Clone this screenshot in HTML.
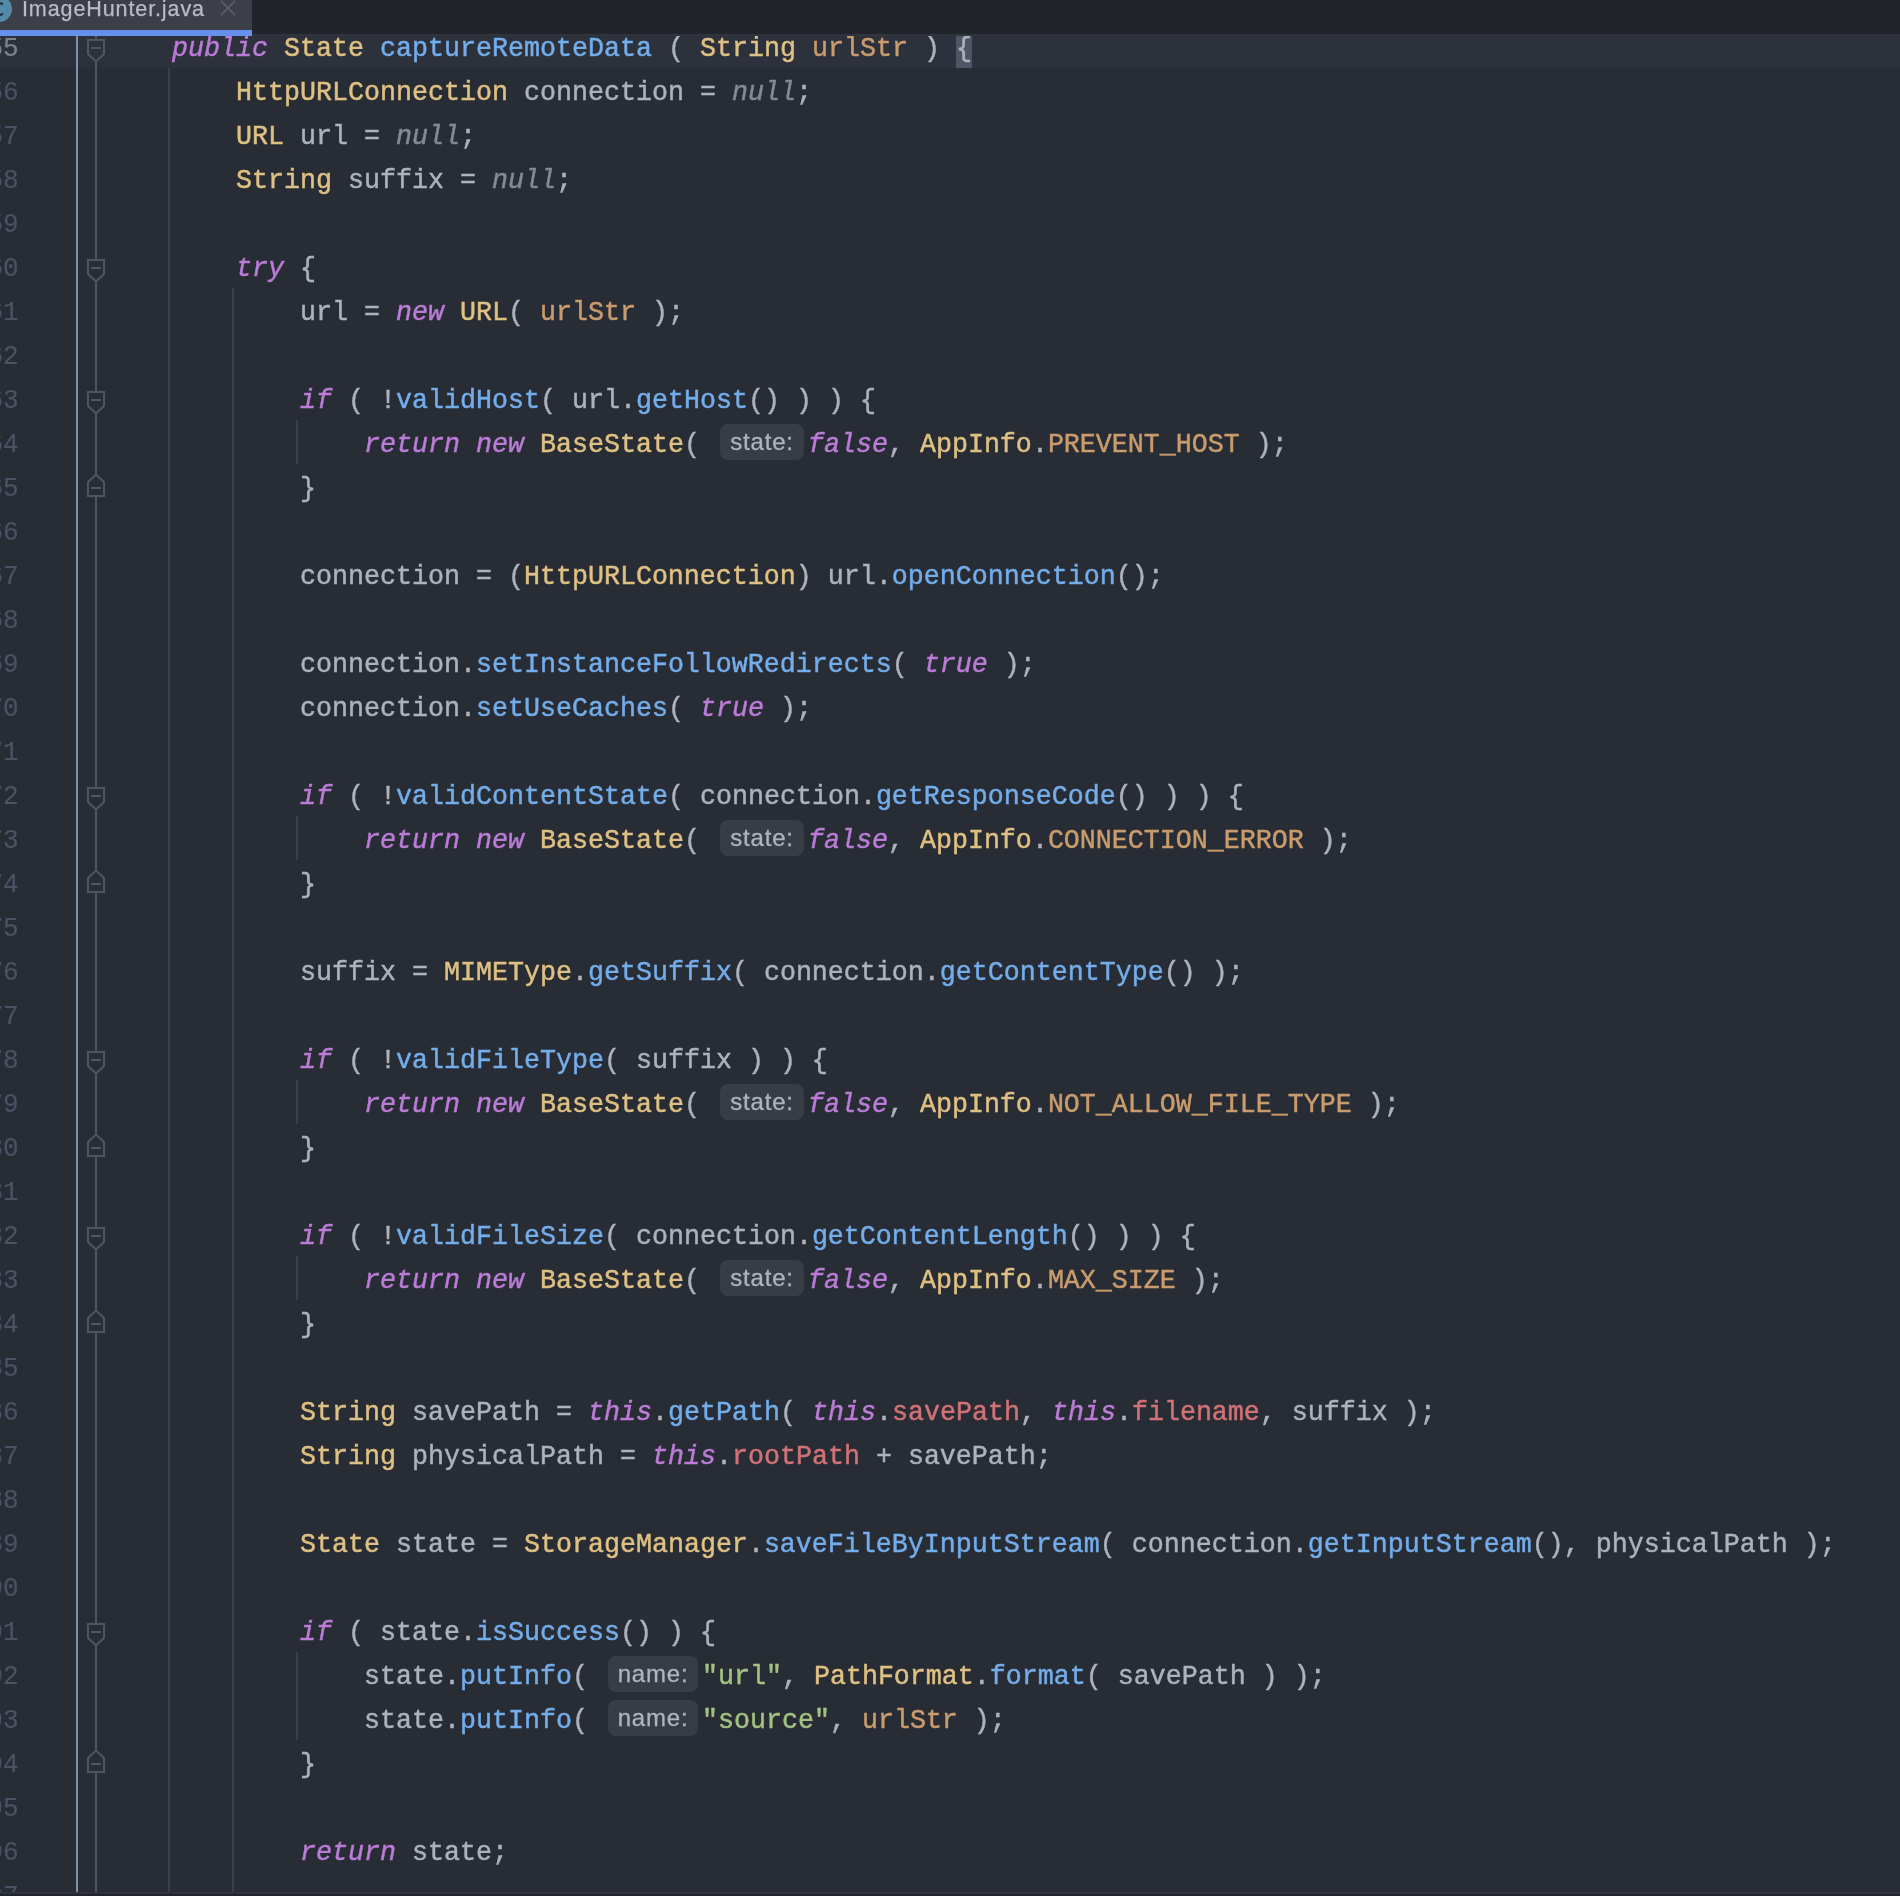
<!DOCTYPE html>
<html><head><meta charset="utf-8"><title>ImageHunter.java</title><style>
*{margin:0;padding:0;box-sizing:border-box}
html,body{width:1900px;height:1896px;overflow:hidden;background:#21252b}
#ed{position:absolute;left:0;top:36px;width:1900px;height:1856px;background:#282c34;overflow:hidden}
#inner{position:absolute;left:0;top:-36px;width:1900px;height:1896px}
.cur{position:absolute;left:0;width:1900px;height:44px;background:#2c313b}
.brace{position:absolute;width:16px;height:44px;background:#4f5565}
.guide{position:absolute;width:2px;background:#3b4048}
.ln{position:absolute;left:108px;height:44px;line-height:44px;white-space:pre;font-family:"Liberation Mono",monospace;font-size:26.667px;color:#acb2be;transform:translateY(2.6px) scaleY(1.07);transform-origin:0 22px;will-change:transform;-webkit-text-stroke:0.45px currentColor}
.ln span{display:inline-block}
.sp{display:inline-block;height:1px}
.k{color:#bb7cd7;font-style:italic}
.t{color:#dfc184}
.f{color:#74adea}
.p{color:#c99c6e}
.c{color:#c99c6e}
.r{color:#d17277}
.s{color:#a1c281}
.n{color:#858a96;font-style:italic}
.d{color:#acb2be}
.inlay{position:absolute;height:36px;line-height:36px;background:#383c46;border-radius:8px;color:#afb4c0;font-family:"Liberation Sans",sans-serif;font-size:24px;letter-spacing:0.8px;text-align:center;will-change:transform;-webkit-text-stroke:0.3px currentColor}
.num{position:absolute;left:-40px;width:58.6px;height:44px;line-height:44px;text-align:right;font-family:"Liberation Mono",monospace;font-size:26px;color:#4b5263;transform:translateY(3px) scaleY(1.04);transform-origin:0 22px;will-change:transform;-webkit-text-stroke:0.2px currentColor}
.cn{color:#7b818d}
.gsep{position:absolute;left:76px;top:0;width:2px;height:1896px;background:#8090aa}
.fline{position:absolute;left:95px;top:0;width:2px;height:1896px;background:#50565f}
.fold{position:absolute;overflow:visible}
#tabbar{position:absolute;left:0;top:0;width:1900px;height:34px;background:#21252b}
#tabline{position:absolute;left:0;top:34px;width:1900px;height:2px;background:#30343d}
#tab{position:absolute;left:0;top:0;width:252px;height:30px;background:#3c3f48}
#tabul{position:absolute;left:0;top:30px;width:252px;height:6px;background:#6590ec}
#tabtxt{position:absolute;left:22px;top:-6px;will-change:transform;-webkit-text-stroke:0.25px currentColor;letter-spacing:0.9px;font-family:"Liberation Sans",sans-serif;font-size:21.5px;color:#b8bcc6;white-space:pre;line-height:30px}
#bot1{position:absolute;left:0;top:1892px;width:1900px;height:2px;background:#30343d}
#bot2{position:absolute;left:0;top:1894px;width:1900px;height:2px;background:#21252b}
</style></head>
<body>
<div id="ed"><div id="inner">
<div class="cur" style="top:24px"></div><div class="brace" style="left:956px;top:24px"></div><div class="guide" style="left:168px;top:68px;height:1824px"></div><div class="guide" style="left:232px;top:288px;height:1604px"></div><div class="guide" style="left:296px;top:420px;height:44px"></div><div class="guide" style="left:296px;top:816px;height:44px"></div><div class="guide" style="left:296px;top:1080px;height:44px"></div><div class="guide" style="left:296px;top:1256px;height:44px"></div><div class="guide" style="left:296px;top:1652px;height:88px"></div>
<div class="gsep"></div><div class="fline"></div>
<div class="num cn" style="top:24px">55</div><div class="num" style="top:68px">56</div><div class="num" style="top:112px">57</div><div class="num" style="top:156px">58</div><div class="num" style="top:200px">59</div><div class="num" style="top:244px">60</div><div class="num" style="top:288px">61</div><div class="num" style="top:332px">62</div><div class="num" style="top:376px">63</div><div class="num" style="top:420px">64</div><div class="num" style="top:464px">65</div><div class="num" style="top:508px">66</div><div class="num" style="top:552px">67</div><div class="num" style="top:596px">68</div><div class="num" style="top:640px">69</div><div class="num" style="top:684px">70</div><div class="num" style="top:728px">71</div><div class="num" style="top:772px">72</div><div class="num" style="top:816px">73</div><div class="num" style="top:860px">74</div><div class="num" style="top:904px">75</div><div class="num" style="top:948px">76</div><div class="num" style="top:992px">77</div><div class="num" style="top:1036px">78</div><div class="num" style="top:1080px">79</div><div class="num" style="top:1124px">80</div><div class="num" style="top:1168px">81</div><div class="num" style="top:1212px">82</div><div class="num" style="top:1256px">83</div><div class="num" style="top:1300px">84</div><div class="num" style="top:1344px">85</div><div class="num" style="top:1388px">86</div><div class="num" style="top:1432px">87</div><div class="num" style="top:1476px">88</div><div class="num" style="top:1520px">89</div><div class="num" style="top:1564px">90</div><div class="num" style="top:1608px">91</div><div class="num" style="top:1652px">92</div><div class="num" style="top:1696px">93</div><div class="num" style="top:1740px">94</div><div class="num" style="top:1784px">95</div><div class="num" style="top:1828px">96</div><div class="num" style="top:1872px">97</div>
<svg class="fold" style="left:86px;top:38px" width="20" height="26" viewBox="0 0 20 26"><path d="M2 2H18V16L10 23.5L2 16Z" fill="#2c313b" stroke="#50565f" stroke-width="2"/><path d="M5 10H15" stroke="#50565f" stroke-width="2"/></svg><svg class="fold" style="left:86px;top:258px" width="20" height="26" viewBox="0 0 20 26"><path d="M2 2H18V16L10 23.5L2 16Z" fill="#282c34" stroke="#50565f" stroke-width="2"/><path d="M5 10H15" stroke="#50565f" stroke-width="2"/></svg><svg class="fold" style="left:86px;top:390px" width="20" height="26" viewBox="0 0 20 26"><path d="M2 2H18V16L10 23.5L2 16Z" fill="#282c34" stroke="#50565f" stroke-width="2"/><path d="M5 10H15" stroke="#50565f" stroke-width="2"/></svg><svg class="fold" style="left:86px;top:786px" width="20" height="26" viewBox="0 0 20 26"><path d="M2 2H18V16L10 23.5L2 16Z" fill="#282c34" stroke="#50565f" stroke-width="2"/><path d="M5 10H15" stroke="#50565f" stroke-width="2"/></svg><svg class="fold" style="left:86px;top:1050px" width="20" height="26" viewBox="0 0 20 26"><path d="M2 2H18V16L10 23.5L2 16Z" fill="#282c34" stroke="#50565f" stroke-width="2"/><path d="M5 10H15" stroke="#50565f" stroke-width="2"/></svg><svg class="fold" style="left:86px;top:1226px" width="20" height="26" viewBox="0 0 20 26"><path d="M2 2H18V16L10 23.5L2 16Z" fill="#282c34" stroke="#50565f" stroke-width="2"/><path d="M5 10H15" stroke="#50565f" stroke-width="2"/></svg><svg class="fold" style="left:86px;top:1622px" width="20" height="26" viewBox="0 0 20 26"><path d="M2 2H18V16L10 23.5L2 16Z" fill="#282c34" stroke="#50565f" stroke-width="2"/><path d="M5 10H15" stroke="#50565f" stroke-width="2"/></svg><svg class="fold" style="left:86px;top:472px" width="20" height="26" viewBox="0 0 20 26"><path d="M2 24H18V10L10 2.5L2 10Z" fill="#282c34" stroke="#50565f" stroke-width="2"/><path d="M5 16H15" stroke="#50565f" stroke-width="2"/></svg><svg class="fold" style="left:86px;top:868px" width="20" height="26" viewBox="0 0 20 26"><path d="M2 24H18V10L10 2.5L2 10Z" fill="#282c34" stroke="#50565f" stroke-width="2"/><path d="M5 16H15" stroke="#50565f" stroke-width="2"/></svg><svg class="fold" style="left:86px;top:1132px" width="20" height="26" viewBox="0 0 20 26"><path d="M2 24H18V10L10 2.5L2 10Z" fill="#282c34" stroke="#50565f" stroke-width="2"/><path d="M5 16H15" stroke="#50565f" stroke-width="2"/></svg><svg class="fold" style="left:86px;top:1308px" width="20" height="26" viewBox="0 0 20 26"><path d="M2 24H18V10L10 2.5L2 10Z" fill="#282c34" stroke="#50565f" stroke-width="2"/><path d="M5 16H15" stroke="#50565f" stroke-width="2"/></svg><svg class="fold" style="left:86px;top:1748px" width="20" height="26" viewBox="0 0 20 26"><path d="M2 24H18V10L10 2.5L2 10Z" fill="#282c34" stroke="#50565f" stroke-width="2"/><path d="M5 16H15" stroke="#50565f" stroke-width="2"/></svg>
<div class="inlay" style="left:720px;top:424px;width:84px">state:</div><div class="inlay" style="left:720px;top:820px;width:84px">state:</div><div class="inlay" style="left:720px;top:1084px;width:84px">state:</div><div class="inlay" style="left:720px;top:1260px;width:84px">state:</div><div class="inlay" style="left:608px;top:1656px;width:90px">name:</div><div class="inlay" style="left:608px;top:1700px;width:90px">name:</div>
<div class="ln" style="top:24px"><span class="d">    </span><span class="k">public</span><span class="d"> </span><span class="t">State</span><span class="d"> </span><span class="f">captureRemoteData</span><span class="d"> ( </span><span class="t">String</span><span class="d"> </span><span class="p">urlStr</span><span class="d"> ) </span><span class="d">{</span></div>
<div class="ln" style="top:68px"><span class="d">        </span><span class="t">HttpURLConnection</span><span class="d"> connection = </span><span class="n">null</span><span class="d">;</span></div>
<div class="ln" style="top:112px"><span class="d">        </span><span class="t">URL</span><span class="d"> url = </span><span class="n">null</span><span class="d">;</span></div>
<div class="ln" style="top:156px"><span class="d">        </span><span class="t">String</span><span class="d"> suffix = </span><span class="n">null</span><span class="d">;</span></div>
<div class="ln" style="top:200px"></div>
<div class="ln" style="top:244px"><span class="d">        </span><span class="k">try</span><span class="d"> {</span></div>
<div class="ln" style="top:288px"><span class="d">            url = </span><span class="k">new</span><span class="d"> </span><span class="t">URL</span><span class="d">( </span><span class="p">urlStr</span><span class="d"> );</span></div>
<div class="ln" style="top:332px"></div>
<div class="ln" style="top:376px"><span class="d">            </span><span class="k">if</span><span class="d"> ( !</span><span class="f">validHost</span><span class="d">( url.</span><span class="f">getHost</span><span class="d">() ) ) {</span></div>
<div class="ln" style="top:420px"><span class="d">                </span><span class="k">return</span><span class="d"> </span><span class="k">new</span><span class="d"> </span><span class="t">BaseState</span><span class="d">( </span><span class="sp" style="width:92px"></span><span class="k">false</span><span class="d">, </span><span class="t">AppInfo</span><span class="d">.</span><span class="c">PREVENT_HOST</span><span class="d"> );</span></div>
<div class="ln" style="top:464px"><span class="d">            }</span></div>
<div class="ln" style="top:508px"></div>
<div class="ln" style="top:552px"><span class="d">            connection = (</span><span class="t">HttpURLConnection</span><span class="d">) url.</span><span class="f">openConnection</span><span class="d">();</span></div>
<div class="ln" style="top:596px"></div>
<div class="ln" style="top:640px"><span class="d">            connection.</span><span class="f">setInstanceFollowRedirects</span><span class="d">( </span><span class="k">true</span><span class="d"> );</span></div>
<div class="ln" style="top:684px"><span class="d">            connection.</span><span class="f">setUseCaches</span><span class="d">( </span><span class="k">true</span><span class="d"> );</span></div>
<div class="ln" style="top:728px"></div>
<div class="ln" style="top:772px"><span class="d">            </span><span class="k">if</span><span class="d"> ( !</span><span class="f">validContentState</span><span class="d">( connection.</span><span class="f">getResponseCode</span><span class="d">() ) ) {</span></div>
<div class="ln" style="top:816px"><span class="d">                </span><span class="k">return</span><span class="d"> </span><span class="k">new</span><span class="d"> </span><span class="t">BaseState</span><span class="d">( </span><span class="sp" style="width:92px"></span><span class="k">false</span><span class="d">, </span><span class="t">AppInfo</span><span class="d">.</span><span class="c">CONNECTION_ERROR</span><span class="d"> );</span></div>
<div class="ln" style="top:860px"><span class="d">            }</span></div>
<div class="ln" style="top:904px"></div>
<div class="ln" style="top:948px"><span class="d">            suffix = </span><span class="t">MIMEType</span><span class="d">.</span><span class="f">getSuffix</span><span class="d">( connection.</span><span class="f">getContentType</span><span class="d">() );</span></div>
<div class="ln" style="top:992px"></div>
<div class="ln" style="top:1036px"><span class="d">            </span><span class="k">if</span><span class="d"> ( !</span><span class="f">validFileType</span><span class="d">( suffix ) ) {</span></div>
<div class="ln" style="top:1080px"><span class="d">                </span><span class="k">return</span><span class="d"> </span><span class="k">new</span><span class="d"> </span><span class="t">BaseState</span><span class="d">( </span><span class="sp" style="width:92px"></span><span class="k">false</span><span class="d">, </span><span class="t">AppInfo</span><span class="d">.</span><span class="c">NOT_ALLOW_FILE_TYPE</span><span class="d"> );</span></div>
<div class="ln" style="top:1124px"><span class="d">            }</span></div>
<div class="ln" style="top:1168px"></div>
<div class="ln" style="top:1212px"><span class="d">            </span><span class="k">if</span><span class="d"> ( !</span><span class="f">validFileSize</span><span class="d">( connection.</span><span class="f">getContentLength</span><span class="d">() ) ) {</span></div>
<div class="ln" style="top:1256px"><span class="d">                </span><span class="k">return</span><span class="d"> </span><span class="k">new</span><span class="d"> </span><span class="t">BaseState</span><span class="d">( </span><span class="sp" style="width:92px"></span><span class="k">false</span><span class="d">, </span><span class="t">AppInfo</span><span class="d">.</span><span class="c">MAX_SIZE</span><span class="d"> );</span></div>
<div class="ln" style="top:1300px"><span class="d">            }</span></div>
<div class="ln" style="top:1344px"></div>
<div class="ln" style="top:1388px"><span class="d">            </span><span class="t">String</span><span class="d"> savePath = </span><span class="k">this</span><span class="d">.</span><span class="f">getPath</span><span class="d">( </span><span class="k">this</span><span class="d">.</span><span class="r">savePath</span><span class="d">, </span><span class="k">this</span><span class="d">.</span><span class="r">filename</span><span class="d">, suffix );</span></div>
<div class="ln" style="top:1432px"><span class="d">            </span><span class="t">String</span><span class="d"> physicalPath = </span><span class="k">this</span><span class="d">.</span><span class="r">rootPath</span><span class="d"> + savePath;</span></div>
<div class="ln" style="top:1476px"></div>
<div class="ln" style="top:1520px"><span class="d">            </span><span class="t">State</span><span class="d"> state = </span><span class="t">StorageManager</span><span class="d">.</span><span class="f">saveFileByInputStream</span><span class="d">( connection.</span><span class="f">getInputStream</span><span class="d">(), physicalPath );</span></div>
<div class="ln" style="top:1564px"></div>
<div class="ln" style="top:1608px"><span class="d">            </span><span class="k">if</span><span class="d"> ( state.</span><span class="f">isSuccess</span><span class="d">() ) {</span></div>
<div class="ln" style="top:1652px"><span class="d">                state.</span><span class="f">putInfo</span><span class="d">( </span><span class="sp" style="width:98px"></span><span class="s">&quot;url&quot;</span><span class="d">, </span><span class="t">PathFormat</span><span class="d">.</span><span class="f">format</span><span class="d">( savePath ) );</span></div>
<div class="ln" style="top:1696px"><span class="d">                state.</span><span class="f">putInfo</span><span class="d">( </span><span class="sp" style="width:98px"></span><span class="s">&quot;source&quot;</span><span class="d">, </span><span class="p">urlStr</span><span class="d"> );</span></div>
<div class="ln" style="top:1740px"><span class="d">            }</span></div>
<div class="ln" style="top:1784px"></div>
<div class="ln" style="top:1828px"><span class="d">            </span><span class="k">return</span><span class="d"> state;</span></div>
<div class="ln" style="top:1872px"></div>
</div></div>
<div id="tabbar"></div><div id="tabline"></div>
<div id="tab"><svg style="position:absolute;left:-14px;top:-4px" width="26" height="26" viewBox="0 0 26 26"><circle cx="13" cy="13" r="13" fill="#528aa8"/><path d="M17 8.5A6 6 0 1 0 17 17.5" fill="none" stroke="#1f3340" stroke-width="2.2"/></svg><div id="tabtxt">ImageHunter.java</div>
<svg style="position:absolute;left:220px;top:0px" width="16" height="16" viewBox="0 0 16 16"><path d="M1 1L15 15M15 1L1 15" stroke="#5c6370" stroke-width="1.6"/></svg></div>
<div id="tabul"></div>
<div id="bot1"></div><div id="bot2"></div>
</body></html>
